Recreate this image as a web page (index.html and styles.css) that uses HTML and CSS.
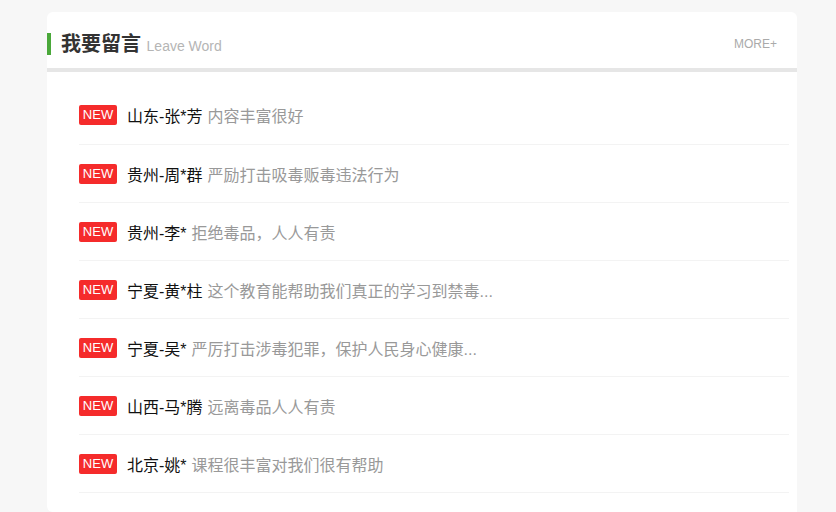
FILE: index.html
```html
<!DOCTYPE html>
<html lang="zh-CN">
<head>
<meta charset="UTF-8">
<meta name="viewport" content="width=device-width, initial-scale=1.0">
<link rel="stylesheet" href="styles.css">
</head>
<body>
<div class="box">
	<div class="box-head">
		<h2 class="title">我要留言 <span class="sub">Leave Word</span></h2>
		<a class="more" href="#">MORE+</a>
	</div>
	<ul class="msg-list">
		<li class="msg"><span class="tag">NEW</span><span class="who">山东-张*芳</span><span class="txt">内容丰富很好</span></li>
		<li class="msg"><span class="tag">NEW</span><span class="who">贵州-周*群</span><span class="txt">严励打击吸毒贩毒违法行为</span></li>
		<li class="msg"><span class="tag">NEW</span><span class="who">贵州-李*</span><span class="txt">拒绝毒品，人人有责</span></li>
		<li class="msg"><span class="tag">NEW</span><span class="who">宁夏-黄*柱</span><span class="txt">这个教育能帮助我们真正的学习到禁毒...</span></li>
		<li class="msg"><span class="tag">NEW</span><span class="who">宁夏-吴*</span><span class="txt">严厉打击涉毒犯罪，保护人民身心健康...</span></li>
		<li class="msg"><span class="tag">NEW</span><span class="who">山西-马*腾</span><span class="txt">远离毒品人人有责</span></li>
		<li class="msg"><span class="tag">NEW</span><span class="who">北京-姚*</span><span class="txt">课程很丰富对我们很有帮助</span></li>
	</ul>
</div>
</body>
</html>
```

FILE: styles.css
```css
body {
	margin: 0;
	padding: 12px 0 0 47px;
	background-color: #f7f7f7;
	font-family: Arial, "Liberation Sans", "Noto Sans CJK SC", sans-serif;
}

.box {
	width: 750px;
	height: 500px;
	background-color: #fff;
	border-radius: 6px 6px 0 6px;
	box-sizing: border-box;
}

.box-head {
	display: flex;
	align-items: center;
	justify-content: space-between;
	height: 60px;
	padding-top: 8px;
	box-sizing: border-box;
	border-bottom: 4px solid #e6e6e6;
}

.title {
	margin: 0;
	padding-left: 10px;
	border-left: 4px solid #4aa83a;
	height: 22px;
	line-height: 22px;
	font-size: 20px;
	font-weight: bold;
	color: #333;
}

.sub {
	font-size: 14px;
	font-weight: normal;
	color: #b5b5b5;
}

.more {
	margin-right: 20px;
	font-size: 12px;
	color: #aaa;
	text-decoration: none;
}

.msg-list {
	list-style: none;
	margin: 0;
	padding: 13px 8px 0 32px;
}

.msg {
	display: flex;
	align-items: center;
	height: 57px;
	border-bottom: 1px solid #f3f3f3;
	font-size: 16px;
}

.msg:first-child {
	height: 59px;
}

.tag {
	width: 38px;
	height: 20px;
	line-height: 20px;
	margin: 1px 10px 0 0;
	border-radius: 2px;
	background-color: #f52b2b;
	color: #fff;
	font-size: 13px;
	text-align: center;
}

.who {
	color: #111;
	margin-right: 5px;
}

.txt {
	color: #999;
}
```
